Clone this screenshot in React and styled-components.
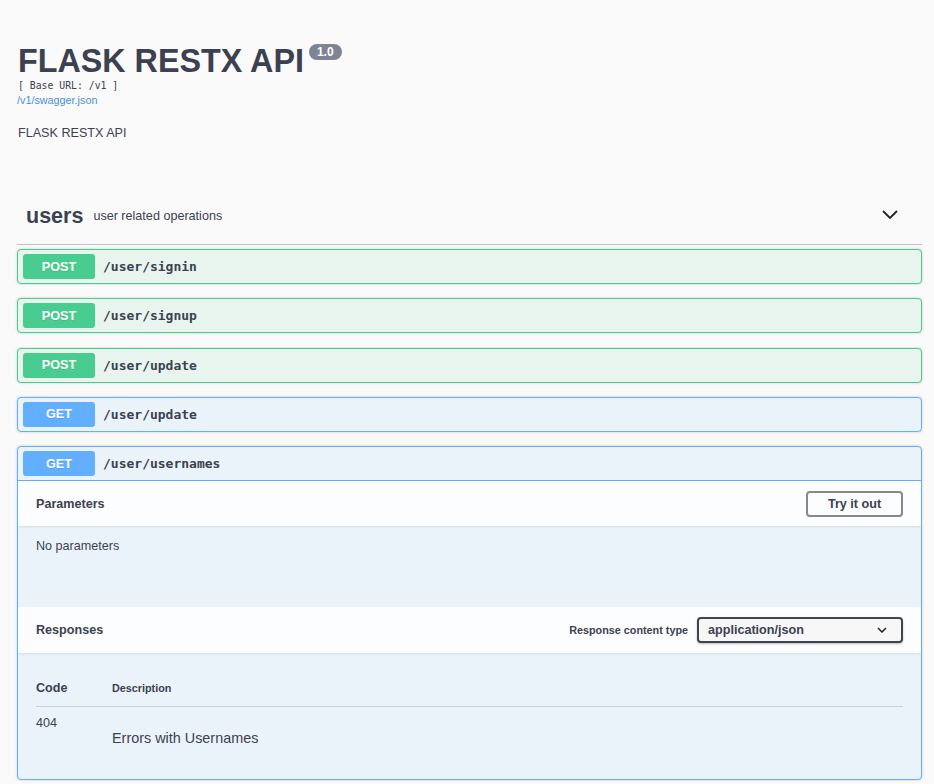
import React from 'react';
import styled, { createGlobalStyle } from 'styled-components';

const GlobalStyle = createGlobalStyle`
    body {
        margin: 0;
        background: #fafafa;
        font-family: "Liberation Sans", Arial, sans-serif;
        color: #3b4151;
    }
`

const Wrapper = styled.div`
    padding: 0 12px 40px 17px;
`

const Info = styled.div`
    padding-top: 43px;
`

const TitleRow = styled.div`
    display: flex;
    align-items: flex-start;
    gap: 5px;
`

const Title = styled.h2`
    margin: 0 0 0 1px;
    font-size: 32.3px;
    line-height: 36px;
    font-weight: 700;
    color: #3b4151;
`

const Version = styled.span`
    margin-top: 1px;
    height: 16px;
    padding: 0 8px;
    border-radius: 8px;
    background: #7d8492;
    color: #fff;
    font-size: 12px;
    font-weight: 700;
    line-height: 16px;
`

const BaseUrl = styled.pre`
    margin: 0 0 0 1px;
    font-family: "DejaVu Sans Mono", monospace;
    font-size: 9.8px;
    line-height: 14px;
    color: #3b4151;
`

const Link = styled.a`
    display: block;
    font-size: 10.8px;
    line-height: 14px;
    color: #4990e2;
    text-decoration: none;
`

const Description = styled.p`
    margin: 17px 0 0 1px;
    font-size: 12.6px;
    line-height: 18px;
`

const TagHeader = styled.h3`
    margin: 43px 0 4px;
    height: 60px;
    padding: 0 24px 0 9px;
    display: flex;
    align-items: center;
    border-bottom: 1px solid rgba(59, 65, 81, 0.3);
    box-sizing: border-box;
    font-weight: 400;
`

const TagName = styled.span`
    font-size: 21.5px;
    font-weight: 700;
    padding-top: 3px;
`

const TagDesc = styled.small`
    flex: 1;
    margin-left: 10px;
    padding-top: 2px;
    font-size: 12.6px;
`

const colors = {
    POST: { main: '#49cc90', bg: '#e8f5ef' },
    GET: { main: '#61affe', bg: '#ebf3fa' }
}

const OpBlock = styled.div`
    margin: 0 0 14.3px;
    border: 1px solid ${p => colors[p.method].main};
    background: ${p => colors[p.method].bg};
    border-radius: 4px;
    box-shadow: 0 0 3px rgba(0, 0, 0, 0.19);
    overflow: hidden;
`

const Summary = styled.div`
    display: flex;
    align-items: center;
    padding: 4px 5px;
    border-bottom: ${p => p.open ? `1px solid ${colors[p.method].main}` : 'none'};
`

const Method = styled.span`
    width: 72px;
    height: 25px;
    border-radius: 3px;
    background: ${p => colors[p.method].main};
    color: #fff;
    font-size: 12.6px;
    font-weight: 700;
    display: flex;
    align-items: center;
    justify-content: center;
    text-shadow: 0 1px 0 rgba(0, 0, 0, 0.1);
`

const Path = styled.span`
    margin-left: 8px;
    font-family: "DejaVu Sans Mono", monospace;
    font-size: 13px;
    font-weight: 600;
    color: #3b4151;
`

const SectionHeader = styled.div`
    display: flex;
    align-items: center;
    justify-content: space-between;
    height: ${p => p.h}px;
    padding: 0 18px;
    background: rgba(255, 255, 255, 0.8);
    box-shadow: 0 1px 2px rgba(0, 0, 0, 0.1);
`

const SectionTitle = styled.h4`
    margin: 0;
    font-size: 12.6px;
    font-weight: 700;
`

const TryButton = styled.button`
    width: 97px;
    height: 26px;
    border: 2px solid #888;
    border-radius: 4px;
    background: transparent;
    font-family: inherit;
    font-size: 12.6px;
    font-weight: 700;
    color: #3b4151;
`

const ParamBody = styled.div`
    height: 81px;
    box-sizing: border-box;
    padding: 11px 18px 0;
    font-size: 12.6px;
    line-height: 18px;
`

const ContentType = styled.div`
    display: flex;
    align-items: center;
    gap: 9px;
`

const ContentLabel = styled.label`
    font-size: 10.8px;
    font-weight: 700;
`

const Select = styled.div`
    width: 206px;
    height: 26px;
    box-sizing: border-box;
    border: 2px solid #41444e;
    border-radius: 4px;
    background: #f7f7f7;
    box-shadow: 0 1px 2px rgba(0, 0, 0, 0.25);
    display: flex;
    align-items: center;
    justify-content: space-between;
    padding: 0 14px 0 9px;
    font-size: 12.6px;
    font-weight: 700;
`

const ResponsesInner = styled.div`
    padding: 27px 18px 32px;
`

const Table = styled.div`
    display: grid;
    grid-template-columns: 76px 1fr;
`

const HeadCell = styled.div`
    padding-bottom: 10px;
    border-bottom: 1px solid rgba(59, 65, 81, 0.2);
    font-size: ${p => p.small ? '10.8px' : '12.6px'};
    font-weight: 700;
    line-height: 16px;
`

const StatusCell = styled.div`
    padding-top: 8px;
    font-size: 12.6px;
    line-height: 16px;
`

const DescCell = styled.div`
    padding-top: 22px;
    font-size: 14.4px;
    line-height: 18px;
`

const Chevron = ({ w, h, sw }) => (
    <svg width={w} height={h} viewBox={`0 0 ${w} ${h}`} fill="none">
        <path d={`M1 1 L${w / 2} ${h - 1} L${w - 1} 1`} stroke="#222" strokeWidth={sw} />
    </svg>
)

const ops = [
    { method: 'POST', path: '/user/signin' },
    { method: 'POST', path: '/user/signup' },
    { method: 'POST', path: '/user/update' },
    { method: 'GET', path: '/user/update' }
]

function App() {
    return (
        <Wrapper>
            <GlobalStyle />
            <Info>
                <TitleRow>
                    <Title>FLASK RESTX API</Title>
                    <Version>1.0</Version>
                </TitleRow>
                <BaseUrl>[ Base URL: /v1 ]</BaseUrl>
                <Link href="#">/v1/swagger.json</Link>
                <Description>FLASK RESTX API</Description>
            </Info>

            <TagHeader>
                <TagName>users</TagName>
                <TagDesc>user related operations</TagDesc>
                <Chevron w={16} h={9} sw={1.8} />
            </TagHeader>

            {ops.map(op => (
                <OpBlock method={op.method} key={op.method + op.path}>
                    <Summary method={op.method}>
                        <Method method={op.method}>{op.method}</Method>
                        <Path>{op.path}</Path>
                    </Summary>
                </OpBlock>
            ))}

            <OpBlock method="GET">
                <Summary method="GET" open>
                    <Method method="GET">GET</Method>
                    <Path>/user/usernames</Path>
                </Summary>
                <SectionHeader h={45}>
                    <SectionTitle>Parameters</SectionTitle>
                    <TryButton>Try it out</TryButton>
                </SectionHeader>
                <ParamBody>No parameters</ParamBody>
                <SectionHeader h={46}>
                    <SectionTitle>Responses</SectionTitle>
                    <ContentType>
                        <ContentLabel>Response content type</ContentLabel>
                        <Select>
                            application/json
                            <Chevron w={10} h={6} sw={1.5} />
                        </Select>
                    </ContentType>
                </SectionHeader>
                <ResponsesInner>
                    <Table>
                        <HeadCell>Code</HeadCell>
                        <HeadCell small>Description</HeadCell>
                        <StatusCell>404</StatusCell>
                        <DescCell>Errors with Usernames</DescCell>
                    </Table>
                </ResponsesInner>
            </OpBlock>
        </Wrapper>
    );
}

export default App;
